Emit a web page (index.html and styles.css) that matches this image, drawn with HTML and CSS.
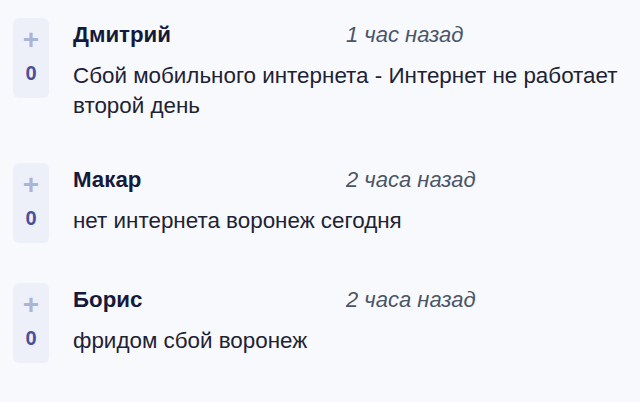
FILE: index.html
```html
<!DOCTYPE html>
<html lang="ru">
<head>
<meta charset="utf-8">
<link rel="stylesheet" href="styles.css">
</head>
<body>
<div class="list">
  <div class="item">
    <div class="vote">
      <span class="plus">+</span>
      <span class="count">0</span>
    </div>
    <div class="content">
      <div class="head"><span class="name">Дмитрий</span><span class="time">1 час назад</span></div>
      <div class="text">Сбой мобильного интернета - Интернет не работает второй день</div>
    </div>
  </div>
  <div class="item">
    <div class="vote">
      <span class="plus">+</span>
      <span class="count">0</span>
    </div>
    <div class="content">
      <div class="head"><span class="name">Макар</span><span class="time">2 часа назад</span></div>
      <div class="text">нет интернета воронеж сегодня</div>
    </div>
  </div>
  <div class="item">
    <div class="vote">
      <span class="plus">+</span>
      <span class="count">0</span>
    </div>
    <div class="content">
      <div class="head"><span class="name">Борис</span><span class="time">2 часа назад</span></div>
      <div class="text">фридом сбой воронеж</div>
    </div>
  </div>
  <div class="item">
    <div class="vote"></div>
  </div>
</div>
</body>
</html>
```
FILE: styles.css
```css
html, body {
  margin: 0;
  padding: 0;
  background: #f8f9fc;
  font-family: "Liberation Sans", Arial, sans-serif;
  overflow: hidden;
}
.list {
  padding: 18px 13px 0 13px;
  display: flex;
  flex-direction: column;
  gap: 40px;
}
.item {
  display: flex;
  align-items: flex-start;
  gap: 24px;
}
.vote {
  flex: none;
  width: 36px;
  height: 80px;
  border-radius: 6px;
  background: #eef0f9;
  display: flex;
  flex-direction: column;
  align-items: center;
}
.plus {
  margin-top: 8px;
  font-size: 28px;
  line-height: 28px;
  font-weight: bold;
  color: #a9b4d8;
}
.count {
  margin-top: 8px;
  font-size: 20px;
  line-height: 22px;
  font-weight: bold;
  color: #4a4f9a;
}
.content {
  padding: 2px 0 2px;
}
.head {
  display: grid;
  grid-template-columns: 273px auto;
  line-height: 30px;
}
.name {
  font-size: 22.3px;
  font-weight: bold;
  color: #161a3a;
}
.time {
  font-size: 22px;
  font-style: italic;
  color: #4a5568;
}
.text {
  margin-top: 11px;
  font-size: 22.4px;
  line-height: 30px;
  color: #1e2235;
}
```
